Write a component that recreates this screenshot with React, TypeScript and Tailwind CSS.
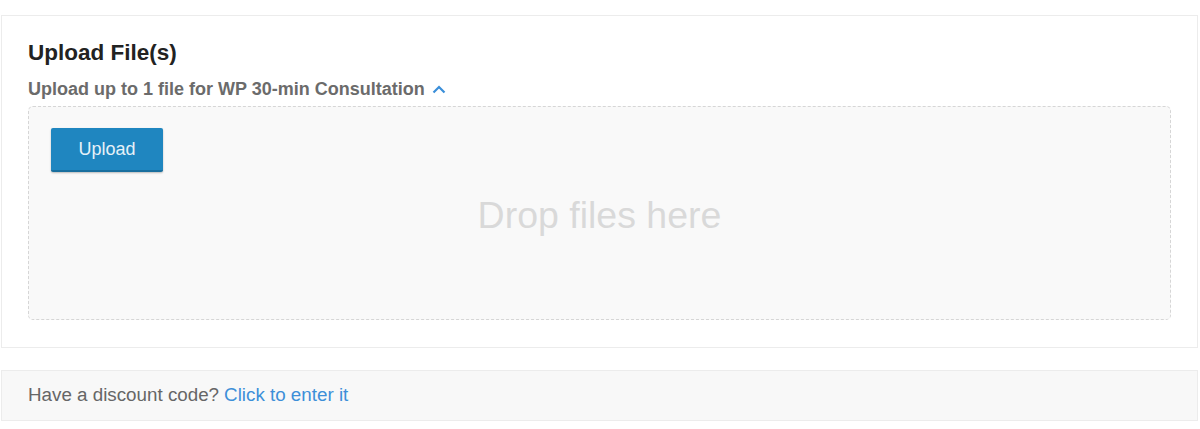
import React from "react";

const App = () => {
  return (
    <div className="w-[1200px] h-[429px] bg-white font-['Liberation_Sans',Arial,sans-serif] pt-[15px] pl-px pr-[2px]">
      {/* UPLOAD CARD */}
      <div className="border border-[#ececec] bg-white px-[26px] pt-[23px] pb-[27px]">
        <h2 className="text-[22.5px] leading-[28px] font-bold text-[#222]">Upload File(s)</h2>
        <div className="mt-[13px] flex items-center gap-[7px] text-[18px] leading-[18px] font-bold text-[#6b6b6b]">
          <span>Upload up to 1 file for WP 30-min Consultation</span>
          <svg width="14" height="9" viewBox="0 0 14 9" fill="none">
            <path d="M1.5 7.5L7 2L12.5 7.5" stroke="#3b8fd9" strokeWidth="2.2" />
          </svg>
        </div>

        {/* DROPZONE */}
        <div className="mt-[8px] h-[214px] rounded-[5px] border border-dashed border-[#d6d6d6] bg-[#f9f9f9] pt-[21px] px-[22px]">
          <button className="w-[112px] h-[44px] rounded-[2px] bg-[#1f86c0] border-b-2 border-[#196f9f] shadow-[0_1px_2px_rgba(0,0,0,0.25)] text-[18px] text-[#e6f1f8]">
            Upload
          </button>
          <div className="mt-[21px] text-center text-[37.5px] leading-[44px] text-[#d9d9d9]">Drop files here</div>
        </div>
      </div>

      {/* DISCOUNT */}
      <div className="mt-[22px] h-[51px] border border-[#ececec] bg-[#f8f8f8] pl-[26px] flex items-center text-[18.8px] text-[#666]">
        <span>Have a discount code?</span>
        <a href="#" className="ml-[5px] text-[#3d8fd8]">Click to enter it</a>
      </div>
    </div>
  );
};

export default App;
